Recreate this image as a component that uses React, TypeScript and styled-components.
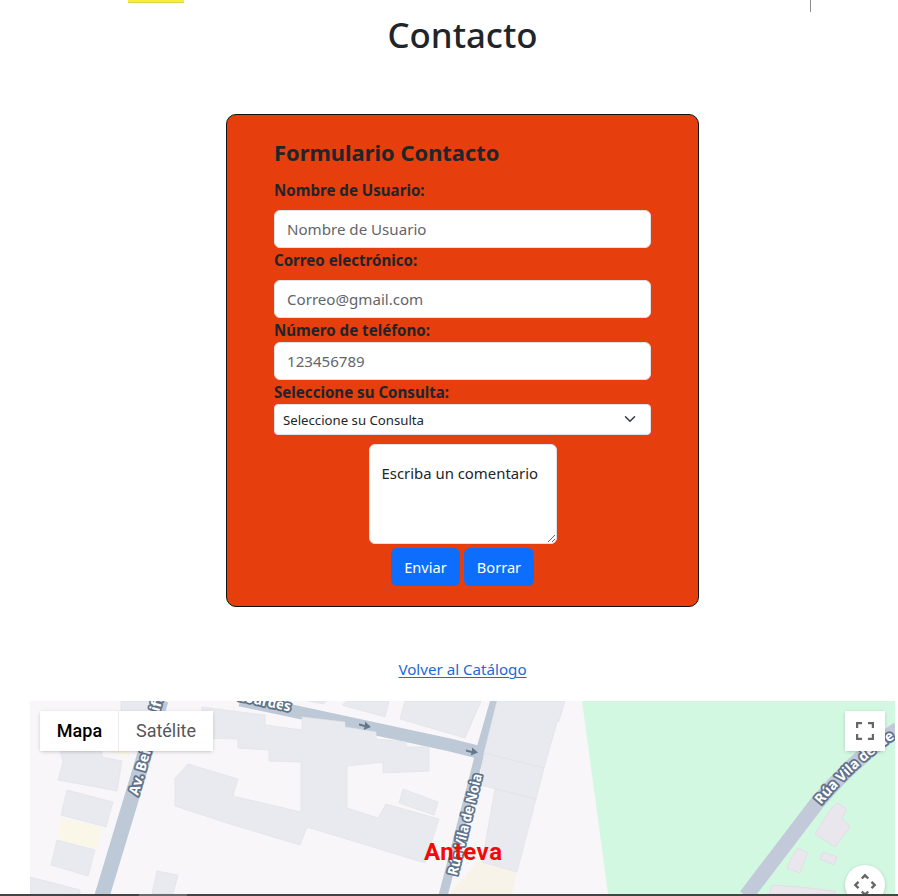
import React from 'react';
import styled, { createGlobalStyle } from 'styled-components';

const GlobalStyle = createGlobalStyle`
  *, *::before, *::after { box-sizing: border-box; }
  html, body { margin: 0; padding: 0; background: #fff; overflow: hidden; }
  body { font-family: "Noto Sans", "Open Sans", sans-serif; color: #212529; }
`;

const Page = styled.div`
  height: 896px;
  display: flex;
  flex-direction: column;
  overflow: hidden;
`;

const Content = styled.main`
  flex: none;
  height: 894px;
  padding: 0 3px 0 30px;
  display: flex;
  flex-direction: column;
  align-items: center;
`;

const TopEdge = styled.div`
  width: 100%;
  height: 12px;
  padding: 0 84px 0 98px;
  display: flex;
  justify-content: space-between;
  align-items: flex-start;
`;

const LogoEdge = styled.div`
  width: 56px;
  height: 3px;
  background: #f5ee3c;
  border-bottom: 1px solid #dcd64e;
`;

const Divider = styled.div`
  width: 1px;
  height: 12px;
  background: #8c8c8c;
`;

const Title = styled.h1`
  margin: 1px 0 58px;
  font-size: 34.8px;
  line-height: 43px;
  font-weight: 500;
`;

const Form = styled.form`
  width: 473px;
  height: 493px;
  padding: 23px 47px 0;
  background: #e63e0c;
  border: 1px solid #111;
  border-radius: 10px;
  display: flex;
  flex-direction: column;
`;

const FormTitle = styled.h2`
  margin: 0 0 11px;
  font-size: 21.9px;
  line-height: 29px;
  font-weight: 700;
`;

const Label = styled.label<{ $gap?: number }>`
  font-size: 15.1px;
  line-height: 24px;
  height: 24px;
  font-weight: 700;
  margin-bottom: ${({ $gap = 0 }) => $gap}px;
`;

const Input = styled.input`
  width: 100%;
  height: 38px;
  padding: 0 12px;
  font: 400 15.1px "Noto Sans", sans-serif;
  color: #212529;
  background: #fff;
  border: 1px solid #dee2e6;
  border-radius: 6px;
  &::placeholder { color: #62666b; opacity: 1; }
`;

const SelectBox = styled.div`
  height: 31px;
  padding: 1px 14px 0 8px;
  display: flex;
  align-items: center;
  justify-content: space-between;
  font-size: 13.2px;
  background: #fff;
  border: 1px solid #dee2e6;
  border-radius: 4px;
  svg { margin-top: -3px; }
`;

const Comment = styled.textarea`
  align-self: center;
  width: 188px;
  height: 100px;
  margin: 9px 0 4px;
  padding: 16px 10px 6px 12px;
  font: 400 14.9px/24px "Noto Sans", sans-serif;
  color: #212529;
  background: #fff;
  border: 1px solid #dee2e6;
  border-radius: 6px;
  overflow: hidden;
`;

const Actions = styled.div`
  display: flex;
  justify-content: center;
  gap: 4px;
`;

const Button = styled.button<{ $width: number }>`
  width: ${({ $width }) => $width}px;
  height: 38px;
  padding: 0;
  font: 400 14.6px "Noto Sans", sans-serif;
  color: #fff;
  background: #0d6efd;
  border: 0;
  border-radius: 6px;
`;

const BackLink = styled.a`
  margin: 50px 0 20px;
  font-size: 15.15px;
  line-height: 24px;
  color: #2069d8;
  text-decoration: underline;
  text-underline-offset: 2px;
  text-decoration-thickness: 1px;
`;

const MapFrame = styled.section`
  position: relative;
  width: 865px;
  height: 193px;
  overflow: hidden;
  background: #f8f6f8;
  font-family: Roboto, sans-serif;
`;

const MapDrawing = styled.svg`
  display: block;
`;

const MapTypes = styled.div`
  position: absolute;
  left: 10px;
  top: 10px;
  display: flex;
  height: 40px;
  background: #fff;
  box-shadow: 0 1px 4px -1px rgba(0, 0, 0, 0.3);
`;

const MapType = styled.button<{ $active?: boolean }>`
  width: ${({ $active }) => ($active ? 79 : 94)}px;
  padding: ${({ $active }) => ($active ? '0 0 2px 1px' : '0 0 2px')};
  border: 0;
  border-right: ${({ $active }) => ($active ? '1px solid #ececec' : '0')};
  background: #fff;
  font: ${({ $active }) => ($active ? 500 : 400)} 18px Roboto, sans-serif;
  color: ${({ $active }) => ($active ? '#000' : '#565656')};
`;

const MapControl = styled.button<{ $top: number; $round?: boolean }>`
  position: absolute;
  right: 10px;
  top: ${({ $top }) => $top}px;
  width: 40px;
  height: 40px;
  padding: 0;
  display: grid;
  place-items: center;
  border: 0;
  border-radius: ${({ $round }) => ($round ? '50%' : '0')};
  background: #fff;
  box-shadow: 0 1px 4px -1px rgba(0, 0, 0, 0.3);
`;

const StreetName = styled.text`
  font: 700 14px "Noto Sans", sans-serif;
  fill: #fff;
  stroke: #5f728a;
  stroke-width: 3.6px;
  stroke-linejoin: round;
  paint-order: stroke;
`;

const PlaceName = styled.text`
  font: 700 24px Roboto, sans-serif;
  fill: #f40808;
`;

const BottomEdge = styled.div`
  flex: none;
  height: 2px;
  padding-left: 139px;
  background: #444;
`;

const BottomMark = styled.div`
  width: 48px;
  height: 2px;
  background: #6a6a6a;
`;

const buildings = [
  '121,701 150,701 147,714 121,714',
  '60,751 102,751 102,757 122,761 117,791 91,786 58,780 63,762',
  '67,790 113,802 106,827 61,815',
  '57,840 95,850 88,876 51,865',
  '30,877 80,890 80,894 30,894',
  '157,871 178,875 173,894 152,894',
  '202,707 240,712 265,715 265,725 302,730 302,717 345,722 345,727 376,732 376,739 406,742 406,747 429,747 429,771 383,773 383,762 347,766 347,808 378,818 386,804 439,819 425,863 307,827 300,845 230,824 175,806 175,778 188,764 238,779 233,796 301,812 301,762 269,761 269,750 238,748 238,739 202,738',
  '403,789 438,802 434,815 399,803',
  '308,701 326,701 324,704',
  '347,701 389,701 385,717 342,705',
  '405,701 481,701 465,738 400,719',
  '497,701 565,701 559,721 557,722 544,768 484,753',
  '484,753 544,768 536,799 480,785',
  '495,789 536,799 517,872 482,862',
];

const yellowLots = ['108,751 130,751 127,758', '61,818 101,827 97,849 58,840'];

const pinkBuildings = [
  '837,803 844,807 847,810 842,818 850,827 835,847 815,834 830,810',
  '798,848 808,853 805,859 800,873 787,868 793,855',
  '823,852 837,857 834,865 820,859',
  '772,885 800,887 835,891 835,894 769,894',
];

function StreetMap() {
  return (
    <MapDrawing width="865" height="193" viewBox="30 701 865 193">
      <polygon points="582,701 593,782 608,894 895,894 895,701" fill="#d2f8e2" />
      {yellowLots.map((p) => (
        <polygon key={p} points={p} fill="#faf6e8" />
      ))}
      <polygon points="478,861 517,872 512,894 449,894" fill="#f8f3e9" />
      <g fill="none" stroke="#bdc9d7">
        <path d="M102 896L134 790L161 700" strokeWidth="15" />
        <path d="M240 700L290 710.5L450 745L478 752" strokeWidth="13" />
        <path d="M495 700L480 752L477 765L443 896" strokeWidth="9" />
      </g>
      <path d="M746 896L817 803Q854 759 898 729" fill="none" stroke="#c2cada" strokeWidth="15" />
      <g fill="#e8eaef" stroke="#dfe2e8" strokeWidth=".7">
        {buildings.map((p) => (
          <polygon key={p} points={p} />
        ))}
      </g>
      <g fill="#eae6ed" stroke="#e2d9e2" strokeWidth=".8">
        {pinkBuildings.map((p) => (
          <polygon key={p} points={p} />
        ))}
      </g>
      <g fill="#65788b">
        <path d="M359 723.5L365 725L365 721.5L371 727L363.5 730L364.5 727L359 725.5Z" />
        <path d="M466 749.5L472 751L472 747.5L478 752.5L470.5 755.5L471.5 753L466 751.5Z" />
      </g>
      <StreetName transform="translate(138 796) rotate(-74)">Av. Beira</StreetName>
      <StreetName transform="translate(159 712) rotate(-74)">ifi</StreetName>
      <StreetName transform="translate(290 711.5) rotate(12)" textAnchor="end" textLength="54">Lourdes</StreetName>
      <StreetName transform="translate(457 876) rotate(-76)" textLength="104" lengthAdjust="spacingAndGlyphs">Rúa Vila de Noia</StreetName>
      <path id="vila-curve" d="M821 805Q858 761 910 728" fill="none" />
      <StreetName>
        <textPath href="#vila-curve">Rúa Vila de Ne</textPath>
      </StreetName>
      <PlaceName x="463" y="860" textAnchor="middle" textLength="78">Anteva</PlaceName>
    </MapDrawing>
  );
}

export default function App() {
  return (
    <Page>
      <GlobalStyle />
      <Content>
        <TopEdge>
          <LogoEdge />
          <Divider />
        </TopEdge>
        <Title>Contacto</Title>
        <Form>
          <FormTitle>Formulario Contacto</FormTitle>
          <Label htmlFor="name" $gap={8}>Nombre de Usuario:</Label>
          <Input id="name" placeholder="Nombre de Usuario" />
          <Label htmlFor="mail" $gap={8}>Correo electrónico:</Label>
          <Input id="mail" placeholder="Correo@gmail.com" />
          <Label htmlFor="phone">Número de teléfono:</Label>
          <Input id="phone" placeholder="123456789" />
          <Label>Seleccione su Consulta:</Label>
          <SelectBox>
            <span>Seleccione su Consulta</span>
            <svg width="12" height="12" viewBox="0 0 16 16" fill="none" stroke="#343a40" strokeWidth="2" strokeLinecap="round" strokeLinejoin="round">
              <path d="m2 5 6 6 6-6" />
            </svg>
          </SelectBox>
          <Comment defaultValue="Escriba un comentario" spellCheck={false} />
          <Actions>
            <Button type="button" $width={69}>Enviar</Button>
            <Button type="button" $width={70}>Borrar</Button>
          </Actions>
        </Form>
        <BackLink href="#">Volver al Catálogo</BackLink>
        <MapFrame>
          <StreetMap />
          <MapTypes>
            <MapType $active>Mapa</MapType>
            <MapType>Satélite</MapType>
          </MapTypes>
          <MapControl $top={10} aria-label="Pantalla completa">
            <svg width="18" height="18" viewBox="0 0 18 18" fill="none" stroke="#666" strokeWidth="2.2">
              <path d="M1.1 6V1.1H6M12 1.1h4.9V6M16.9 12v4.9H12M6 16.9H1.1V12" />
            </svg>
          </MapControl>
          <MapControl $top={164} $round aria-label="Controles de cámara">
            <svg width="24" height="24" viewBox="0 0 24 24" fill="none" stroke="#666" strokeWidth="2.4">
              <path d="M8.8 5.5L12 2.3l3.2 3.2M8.8 18.5L12 21.7l3.2-3.2M5.5 8.8L2.3 12l3.2 3.2M18.5 8.8L21.7 12l-3.2 3.2" />
            </svg>
          </MapControl>
        </MapFrame>
      </Content>
      <BottomEdge>
        <BottomMark />
      </BottomEdge>
    </Page>
  );
}
